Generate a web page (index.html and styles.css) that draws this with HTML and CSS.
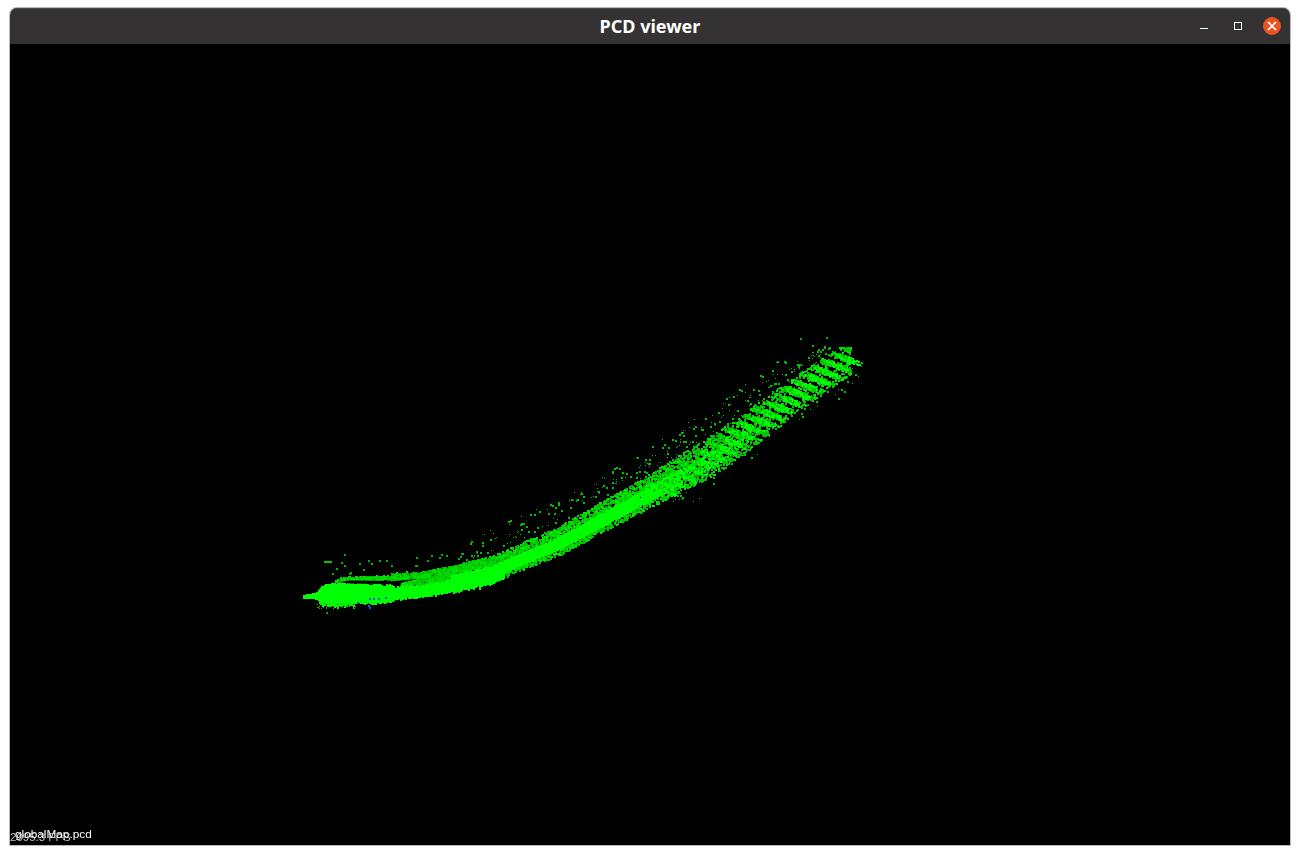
FILE: index.html
```html
<!DOCTYPE html>
<html lang="en">
<head>
  <meta charset="UTF-8">
  <title>PCD viewer</title>
  <link rel="stylesheet" href="styles.css">
</head>
<body>

<div class="window">
  <div class="titlebar">
    <span class="title">PCD viewer</span>
    <div class="controls">
      <svg class="ctl" width="10" height="10" viewBox="0 0 10 10"><path d="M1 7.5h8" stroke="#fff" fill="none"/></svg>
      <svg class="ctl" width="10" height="10" viewBox="0 0 10 10"><rect x="1.5" y="1.5" width="7" height="7" stroke="#fff" fill="none"/></svg>
      <div class="close">
        <svg width="10" height="10" viewBox="0 0 10 10"><path d="M1 1l8 8M9 1l-8 8" stroke="#fff" stroke-width="1.6" fill="none"/></svg>
      </div>
    </div>
  </div>
  <div class="view">
    <canvas id="cloud" width="1280" height="801"></canvas>
    <span class="fps">2095.3 FPS</span>
    <span class="cloud-id">globalMap.pcd</span>
  </div>
</div>

<script src="cloud.js"></script>
</body>
</html>
```

FILE: styles.css
```css
* { box-sizing: border-box; margin: 0; padding: 0; }
html, body { height: 100%; overflow: hidden; }
body {
  background: #fff;
  padding: 8px 10px 10px;
  font-family: "Liberation Sans", Arial, sans-serif;
}
.window {
  display: flex;
  flex-direction: column;
  height: 837px;
  border-radius: 7px 7px 0 0;
  box-shadow: 0 0 0 1px #b9b9b9;
  overflow: hidden;
}
.titlebar {
  position: relative;
  flex: 0 0 36px;
  display: flex;
  align-items: center;
  justify-content: center;
  background: #343232;
  border-top: 1px solid #4a4848;
  padding-bottom: 1px;
}
.title {
  font-family: "Noto Sans", sans-serif;
  font-size: 18px;
  font-weight: 700;
  color: #fff;
}
.controls {
  position: absolute;
  top: 8px;
  right: 9px;
  display: flex;
  align-items: center;
  gap: 20px;
}
.ctl:first-child { margin-right: 4px; }
.close {
  width: 18px;
  height: 18px;
  border-radius: 50%;
  background: #e95420;
  display: flex;
  align-items: center;
  justify-content: center;
}
.view {
  position: relative;
  flex: 1;
  background: #000;
}
#cloud { display: block; }
.fps, .cloud-id {
  position: absolute;
  line-height: 12px;
  white-space: nowrap;
}
.fps { left: 0; bottom: 2px; font-size: 11.5px; color: #bdbdbd; }
.cloud-id { left: 5px; bottom: 5px; font-size: 11.8px; color: #fff; }
```

FILE: cloud.js
```js
// fake point cloud, seeded so each load gives the same picture
const canvas = document.getElementById("cloud");
const ctx = canvas.getContext("2d");
const OX = 10, OY = 44;

let seed = 12345;
function rnd() {
  seed = (seed * 1664525 + 1013904223) % 4294967296;
  return seed / 4294967296;
}
function gauss() {
  return (rnd() + rnd() + rnd() + rnd() - 2) / 1.2;
}
function lerp(path, x) {
  for (let i = 1; i < path.length; i++) {
    if (x <= path[i][0]) {
      const a = path[i - 1], b = path[i];
      return a[1] + (b[1] - a[1]) * (x - a[0]) / (b[0] - a[0]);
    }
  }
  return path[path.length - 1][1];
}
function dot(x, y, color, size) {
  ctx.fillStyle = color;
  ctx.fillRect(Math.round(x - OX), Math.round(y - OY), size, size);
}
// true when a point should be dropped because it falls between two rungs,
// the gaps fade in towards the far end
function inGap(x, y) {
  const u = ((y - 358) - (x - 845) * 0.38) / 10.52;
  const f = u - Math.floor(u);
  const fade = Math.min(1, Math.max(0, (x - 620) / 170));
  return Math.abs(f - 0.5) < 0.2 && rnd() < fade * 0.88;
}

// near end: fat blob and its tail
const main = [[303,596],[330,594],[350,593],[390,593],[423,590],[457,585],[490,577],[520,566]];
const mainW = [[303,0.8],[316,2],[322,8],[345,9],[375,7],[400,5],[457,5],[520,5]];
const upper = [[335,581],[345,578],[390,577],[423,574],[457,568],[490,561],[520,549]];

// the wide part of the strand, top and bottom edge
const edgeTop = [[400,576],[430,570],[490,556],[560,525],[640,479],[720,429],[800,372],[840,346]];
const edgeBot = [[400,598],[430,595],[490,583],[560,554],[640,512],[720,471],[800,409],[864,364]];

// dim speckle across the whole width
for (let i = 0; i < 8200; i++) {
  const x = 400 + rnd() * 450;
  const t = lerp(edgeTop, x), b = lerp(edgeBot, x);
  let k = rnd();
  if (rnd() < 0.3) k = 0.5 + gauss() * 0.3;
  const y = t + (b - t) * k;
  if (inGap(x, y)) continue;
  dot(x, y, rnd() < 0.6 ? "#00c400" : "#00e800", 2);
}
// upper strand at the near end
for (let i = 0; i < 1800; i++) {
  const x = 335 + rnd() * 170;
  const w = x < 390 ? 1.6 : 3.4;
  dot(x, lerp(upper, x) + gauss() * w, rnd() < 0.6 ? "#00e000" : "#00b800", 2);
}
// bright threads along the middle, thinning out towards the rungs
for (let i = 0; i < 5600; i++) {
  const x = 450 + rnd() * (rnd() < 0.8 ? 230 : 300);
  const t = lerp(edgeTop, x), b = lerp(edgeBot, x);
  const k = [0.44, 0.58, 0.72][i % 3] + gauss() * 0.06;
  const y = t + (b - t) * k;
  if (inGap(x, y)) continue;
  dot(x, y, "#00ff00", 2);
}
// blob and tail
for (let i = 0; i < 11000; i++) {
  const x = 303 + rnd() * (rnd() < 0.55 ? 90 : 200);
  dot(x, lerp(main, x) + gauss() * lerp(mainW, x) * 1.05, "#00ff00", 2);
}

// rungs near the far end, each a short slanted bar
for (let i = 0; i < 20; i++) {
  const cx = 845 - i * 9.4, cy = 358 + i * 6.95;
  const n = i < 11 ? 130 : 70;
  for (let j = 0; j < n; j++) {
    const t = gauss() * 10;
    dot(cx + t, cy + t * 0.38 + gauss() * 2.2, "#00ff00", 2);
  }
  for (let j = 0; j < 46; j++) {
    const t = gauss() * 22;
    const x = cx + t - 3, y = cy + t * 0.38 + gauss() * 7;
    if (inGap(x, y)) continue;
    dot(x, y, "#00c400", 1 + (j % 2));
  }
}

// black slot between the two strands at the near end
ctx.fillStyle = "#000";
ctx.save();
ctx.translate(-OX, -OY);
ctx.beginPath();
ctx.moveTo(338, 582);
ctx.lineTo(350, 580.5);
ctx.lineTo(395, 581);
ctx.lineTo(418, 579);
ctx.lineTo(395, 584);
ctx.lineTo(350, 583.5);
ctx.closePath();
ctx.fill();
ctx.restore();

// stray points above the strand
for (let i = 0; i < 260; i++) {
  const x = 470 + rnd() * 360;
  const up = 3 + rnd() * (x > 790 ? 10 : 24);
  dot(x, lerp(edgeTop, x) - up, "#00c000", rnd() < 0.5 ? 1 : 2);
}
for (let i = 0; i < 26; i++) {
  const x = 330 + rnd() * 140;
  dot(x, lerp(upper, x) - 5 - rnd() * 13, "#00b800", 2);
}
// bits under the near end
for (let i = 0; i < 50; i++) {
  dot(315 + rnd() * 40, 603 + rnd() * 5, "#00c800", 1);
}
dot(326, 612, "#00a800", 2);
dot(344, 554, "#00a800", 2);
for (let x = 324; x < 332; x += 2) dot(x, 561, "#00c800", 2);
dot(826, 337, "#00b000", 2);
dot(800, 338, "#00b000", 2);

// few blue ones in the blob
[[357,602],[369,598],[373,598],[378,598],[368,605],[369,607],[385,597]].forEach(p => dot(p[0], p[1], "#0060e0", 2));
```
